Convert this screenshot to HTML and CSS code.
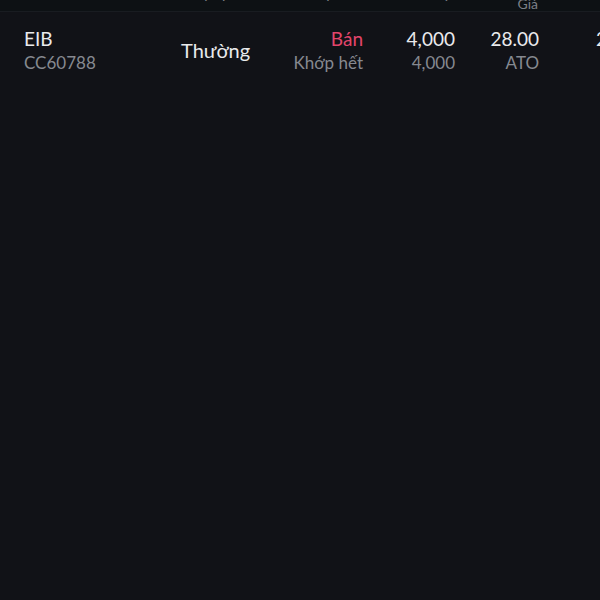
FILE: index.html
```html
<!DOCTYPE html>
<html lang="vi">
<head>
    <meta charset="UTF-8">
    <meta name="viewport" content="width=device-width, initial-scale=1.0">
    <title>Sổ lệnh</title>
    <link rel="stylesheet" href="styles.css">
</head>
<body>

    <!-- Header (cuộn khuất một phần) -->
    <div class="head">
        <div class="cell c-code"><span class="single">Mã CK</span></div>
        <div class="cell c-type"><span class="single">Loại lệnh</span></div>
        <div class="cell c-side"><span class="single">Lệnh</span></div>
        <div class="cell c-qty"><span class="single">KL đặt</span></div>
        <div class="cell c-price"><span>Giá đặt</span><span>Giá</span></div>
        <div class="cell c-more"><span class="single">Thời gian</span></div>
    </div>

    <!-- Danh sách lệnh -->
    <div class="list">
        <div class="row">
            <div class="cell c-code">
                <span class="main">EIB</span>
                <span class="sub">CC60788</span>
            </div>
            <div class="cell c-type">
                <span class="main type">Thường</span>
            </div>
            <div class="cell c-side">
                <span class="main sell">Bán</span>
                <span class="sub">Khớp hết</span>
            </div>
            <div class="cell c-qty">
                <span class="main">4,000</span>
                <span class="sub">4,000</span>
            </div>
            <div class="cell c-price">
                <span class="main">28.00</span>
                <span class="sub">ATO</span>
            </div>
            <div class="cell c-more">
                <span class="main">2</span>
            </div>
        </div>
    </div>

</body>
</html>
```

FILE: styles.css
```css
body {
    margin: 0;
    padding: 0;
    background-color: #111217;
    font-family: Lato, "Noto Sans", sans-serif;
    color: #e9eaec;
    overflow: hidden;
}
.head, .row {
    display: grid;
    grid-template-columns: 157px 110px 72px 92px 84px 1fr;
    padding-left: 24px;
}
.head {
    height: 11px;
    grid-auto-rows: 11px;
    overflow: hidden;
    background-color: #0d1114;
    border-bottom: 1px solid #191c21;
    align-items: end;
    font-size: 14px;
    line-height: 15px;
    color: #7d8087;
}
.cell {
    display: flex;
    flex-direction: column;
    white-space: nowrap;
}
.c-type { justify-content: center; }
.c-side, .c-qty, .c-price { align-items: flex-end; }
.c-more { padding-left: 57px; }

.head .c-type { padding-left: 7px; }
.head .single { margin-bottom: 10px; }
.head .c-side { padding-right: 16px; }
.head .c-price { padding-right: 1px; }

.row {
    padding-top: 15px;
    padding-bottom: 14px;
}
.main {
    font-size: 19px;
    line-height: 24px;
}
.sub {
    font-size: 17px;
    line-height: 24px;
    color: #868990;
}
.type {
    font-size: 20px;
    margin-bottom: 3px;
}
.sell {
    color: #e2456b;
}
```
